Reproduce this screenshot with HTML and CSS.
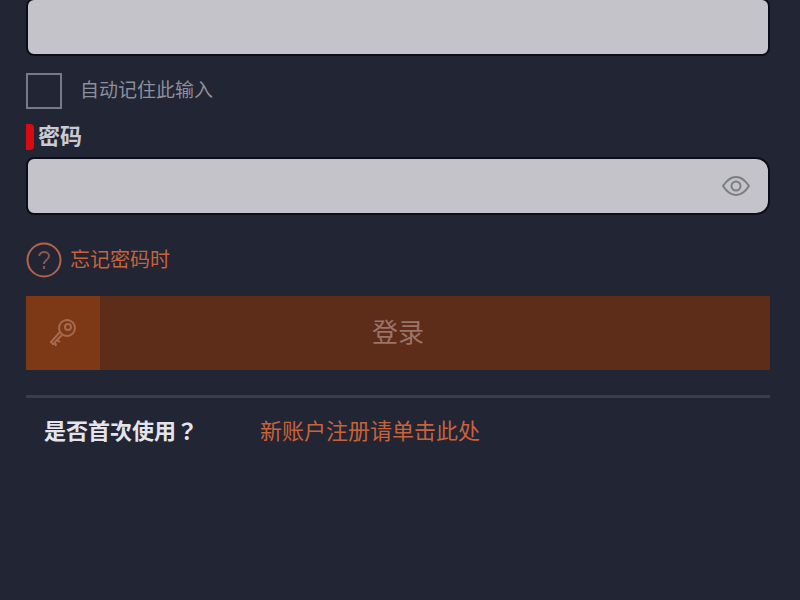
FILE: index.html
```html
<!DOCTYPE html>
<html lang="zh-CN">
<head>
    <meta charset="UTF-8">
    <meta name="viewport" content="width=device-width, initial-scale=1.0">
    <title>登录</title>
    <link rel="stylesheet" href="styles.css">
</head>
<body>
    <form class="login" id="loginForm">
        <input class="field" type="text" id="account" aria-label="账户">

        <div class="remember">
            <input type="checkbox" id="remember">
            <label for="remember">自动记住此输入</label>
        </div>

        <label class="required" for="password">密码</label>
        <div class="field password">
            <input type="password" id="password">
            <button type="button" class="toggle" id="toggle" aria-label="显示密码">
                <svg width="28" height="20" viewBox="0 0 28 20" fill="none" stroke="#7c7c84" stroke-width="2">
                    <path d="M1 10C5 4 9 1 14 1s9 3 13 9c-4 6-8 9-13 9S5 16 1 10z"/>
                    <circle cx="14" cy="10" r="4.5"/>
                </svg>
            </button>
        </div>

        <a class="forgot" href="#">
            <svg width="36" height="36" viewBox="0 0 36 36" fill="none" stroke="#b5624a" stroke-width="2">
                <circle cx="18" cy="18" r="16.5"/>
                <path d="M13 14c1-3 3-4 5-4 3 0 5 2 5 4 0 4-5 4-5 8M18 24v3" stroke="#8d5550"/>
            </svg>
            忘记密码时
        </a>

        <button type="submit" class="submit">
            <span class="key">
                <svg width="28" height="30" viewBox="0 0 28 30" fill="none" stroke="#a66a50" stroke-width="2">
                    <path d="M11 14L2 24l2 2 3-1M13 17l-7 7 1 4M8 22l3 2"/>
                    <circle cx="18" cy="10" r="8"/>
                    <circle cx="19" cy="9" r="3"/>
                </svg>
            </span>
            <span class="text">登录</span>
        </button>

        <hr>

        <div class="signup">
            <span class="question" lang="zh-TW">是否首次使用？</span>
            <a href="#">新账户注册请单击此处</a>
        </div>
    </form>

    <script>
        document.getElementById('toggle').addEventListener('click', function() {
            const password = document.getElementById('password');
            password.type = password.type === 'password' ? 'text' : 'password';
        });
    </script>
</body>
</html>
```

FILE: styles.css
```css
* {
    box-sizing: border-box;
}
body {
    margin: 0;
    background-color: #212534;
    color: #e4e4ec;
    font-family: "Liberation Sans", "Noto Sans CJK SC", sans-serif;
    font-size: 22px;
    line-height: 28px;
}
a {
    color: #c8623a;
    text-decoration: none;
}
input, button {
    font: inherit;
}
.login {
    display: flex;
    flex-direction: column;
    margin-top: -2px;
    padding: 0 30px 0 26px;
}
.field {
    width: 100%;
    height: 58px;
    padding: 0 18px;
    border: 2px solid #0c0d18;
    border-radius: 8px;
    background-color: #c3c3c9;
}
.remember {
    display: flex;
    align-items: center;
    gap: 18px;
    margin: 17px 0 14px;
    color: #8d8f9c;
    font-size: 19px;
}
.remember input {
    appearance: none;
    width: 36px;
    height: 36px;
    margin: 0;
    border: 2px solid #777a8a;
}
.remember input:checked {
    background-color: #777a8a;
}
.required {
    display: flex;
    align-items: center;
    gap: 4px;
    margin-bottom: 6px;
    color: #c9cad6;
    font-weight: bold;
}
.required::before {
    content: "";
    width: 8px;
    height: 26px;
    background-color: #d80b10;
    border-radius: 0 4px 4px 0;
}
.password {
    display: flex;
    align-items: center;
    border-radius: 8px 14px 14px 8px;
}
.password input {
    flex: 1;
    border: none;
    outline: none;
    background: none;
}
.toggle {
    display: flex;
    padding: 0;
    border: none;
    background: none;
    cursor: pointer;
}
.forgot {
    display: flex;
    align-items: center;
    align-self: flex-start;
    gap: 8px;
    margin: 27px 0 18px;
    font-size: 20px;
}
.submit {
    display: flex;
    align-items: stretch;
    height: 74px;
    padding: 0;
    border: none;
    background-color: #5e2d1a;
    color: #9b7468;
    font-size: 26px;
    cursor: pointer;
}
.key {
    display: flex;
    align-items: center;
    justify-content: center;
    width: 74px;
    background-color: #7d3816;
}
.text {
    flex: 1;
    align-self: center;
    padding-right: 74px;
}
hr {
    width: 100%;
    height: 3px;
    margin: 25px 0 20px;
    border: none;
    background-color: #3a3d50;
}
.signup {
    display: flex;
    flex-wrap: wrap;
    column-gap: 62px;
    padding-left: 18px;
}
.question {
    font-family: "Liberation Sans", "Noto Sans CJK TC", sans-serif;
    font-weight: bold;
}
```
